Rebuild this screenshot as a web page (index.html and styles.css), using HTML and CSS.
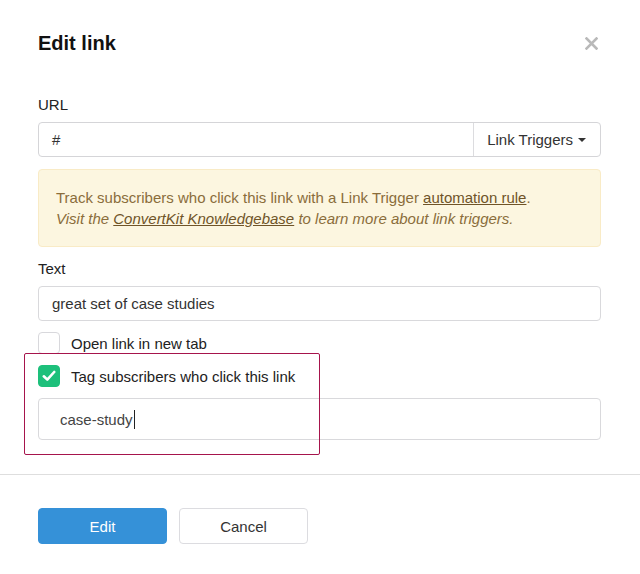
FILE: index.html
```html
<!DOCTYPE html>
<html lang="en">
<head>
    <meta charset="UTF-8">
    <meta name="viewport" content="width=device-width, initial-scale=1.0">
    <title>Edit link</title>
    <link rel="stylesheet" href="styles.css">
</head>
<body>
    <div class="modal">
        <div class="modal-header">
            <h2>Edit link</h2>
            <button class="close" aria-label="Close">
                <svg width="13" height="13" viewBox="0 0 13 13">
                    <path d="M1.5 1.5 L11.5 11.5 M11.5 1.5 L1.5 11.5" stroke="#b9b9b9" stroke-width="2.6" stroke-linecap="square"/>
                </svg>
            </button>
        </div>

        <div class="modal-body">
            <label class="field-label">URL</label>
            <div class="input-group">
                <div class="input-value">#</div>
                <div class="input-addon">Link Triggers <span class="caret"></span></div>
            </div>

            <div class="alert">
                Track subscribers who click this link with a Link Trigger <a href="#">automation rule</a>.<br>
                <em>Visit the <a href="#">ConvertKit Knowledgebase</a> to learn more about link triggers.</em>
            </div>

            <label class="field-label">Text</label>
            <div class="text-input">great set of case studies</div>

            <div class="check-row">
                <span class="checkbox"></span>
                <span>Open link in new tab</span>
            </div>

            <div class="tag-section">
                <div class="highlight"></div>
                <div class="check-row">
                    <span class="checkbox checked">
                        <svg width="14" height="12" viewBox="0 0 14 12">
                            <path d="M1.8 6.3 L5.3 9.6 L12.2 2" fill="none" stroke="#fff" stroke-width="2.6" stroke-linecap="round" stroke-linejoin="round"/>
                        </svg>
                    </span>
                    <span>Tag subscribers who click this link</span>
                </div>
                <div class="tag-input">case-study<span class="cursor"></span></div>
            </div>
        </div>

        <div class="modal-footer">
            <button class="btn btn-primary">Edit</button>
            <button class="btn btn-default">Cancel</button>
        </div>
    </div>
</body>
</html>
```

FILE: styles.css
```css
body {
    margin: 0;
    font-family: "Liberation Sans", Arial, sans-serif;
    font-size: 15px;
    color: #333;
    background-color: #fff;
}
.modal {
    width: 640px;
}
.modal-header {
    display: flex;
    justify-content: space-between;
    align-items: center;
    padding: 31px 42px 0 38px;
}
.modal-header h2 {
    margin: 0;
    font-size: 20px;
    line-height: 24px;
    font-weight: bold;
    color: #111;
}
.close {
    border: none;
    background: none;
    padding: 0;
    margin-top: 1px;
    cursor: pointer;
    display: flex;
}
.modal-body {
    padding: 40px 39px 0 38px;
}
.field-label {
    display: block;
    line-height: 20px;
    color: #222;
    margin-bottom: 7px;
}
.input-group {
    display: flex;
    height: 35px;
    box-sizing: border-box;
    border: 1px solid #d5d5d8;
    border-radius: 4px;
}
.input-value {
    flex: 1;
    padding: 0 13px;
    line-height: 33px;
}
.input-addon {
    display: flex;
    align-items: center;
    padding: 0 14px 0 13px;
    border-left: 1px solid #dcdcdf;
    color: #333;
}
.caret {
    display: inline-block;
    margin-left: 5px;
    border-top: 4px solid #333;
    border-left: 4px solid transparent;
    border-right: 4px solid transparent;
}
.alert {
    margin: 12px 0 12px;
    padding: 17px;
    background-color: #fcf6e0;
    border: 1px solid #f9ebc6;
    border-radius: 4px;
    color: #8a6d3b;
    line-height: 21px;
}
.alert a {
    color: #6f5428;
    text-decoration: underline;
}
.text-input {
    height: 35px;
    box-sizing: border-box;
    border: 1px solid #d9d9dc;
    border-radius: 4px;
    padding: 0 13px;
    line-height: 33px;
    color: #333;
}
.check-row {
    display: flex;
    align-items: center;
    gap: 11px;
    height: 22px;
    margin-top: 11px;
    color: #222;
}
.checkbox {
    width: 22px;
    height: 22px;
    box-sizing: border-box;
    border: 1px solid #d8d8dc;
    border-radius: 4px;
    display: flex;
    align-items: center;
    justify-content: center;
}
.checkbox.checked {
    background-color: #1dc07b;
    border-color: #1dc07b;
}
.tag-section {
    position: relative;
}
.highlight {
    position: absolute;
    top: -12px;
    left: -14px;
    width: 296px;
    height: 102px;
    border: 1px solid #a6144c;
    border-radius: 2px;
    box-sizing: border-box;
    pointer-events: none;
}
.tag-input {
    display: flex;
    align-items: center;
    height: 42px;
    box-sizing: border-box;
    margin-top: 11px;
    border: 1px solid #d9d9dc;
    border-radius: 4px;
    padding: 0 21px;
    color: #444;
}
.cursor {
    display: inline-block;
    width: 1px;
    height: 19px;
    background-color: #222;
    margin-left: 1px;
}
.modal-footer {
    margin-top: 34px;
    border-top: 1px solid #dedede;
    padding: 33px 38px;
    display: flex;
    gap: 12px;
}
.btn {
    width: 129px;
    height: 36px;
    border-radius: 4px;
    font-family: inherit;
    font-size: 15px;
    cursor: pointer;
}
.btn-primary {
    background-color: #3591d8;
    border: 1px solid #3591d8;
    color: #fff;
}
.btn-default {
    background-color: #fff;
    border: 1px solid #dcdce0;
    color: #333;
}
```
